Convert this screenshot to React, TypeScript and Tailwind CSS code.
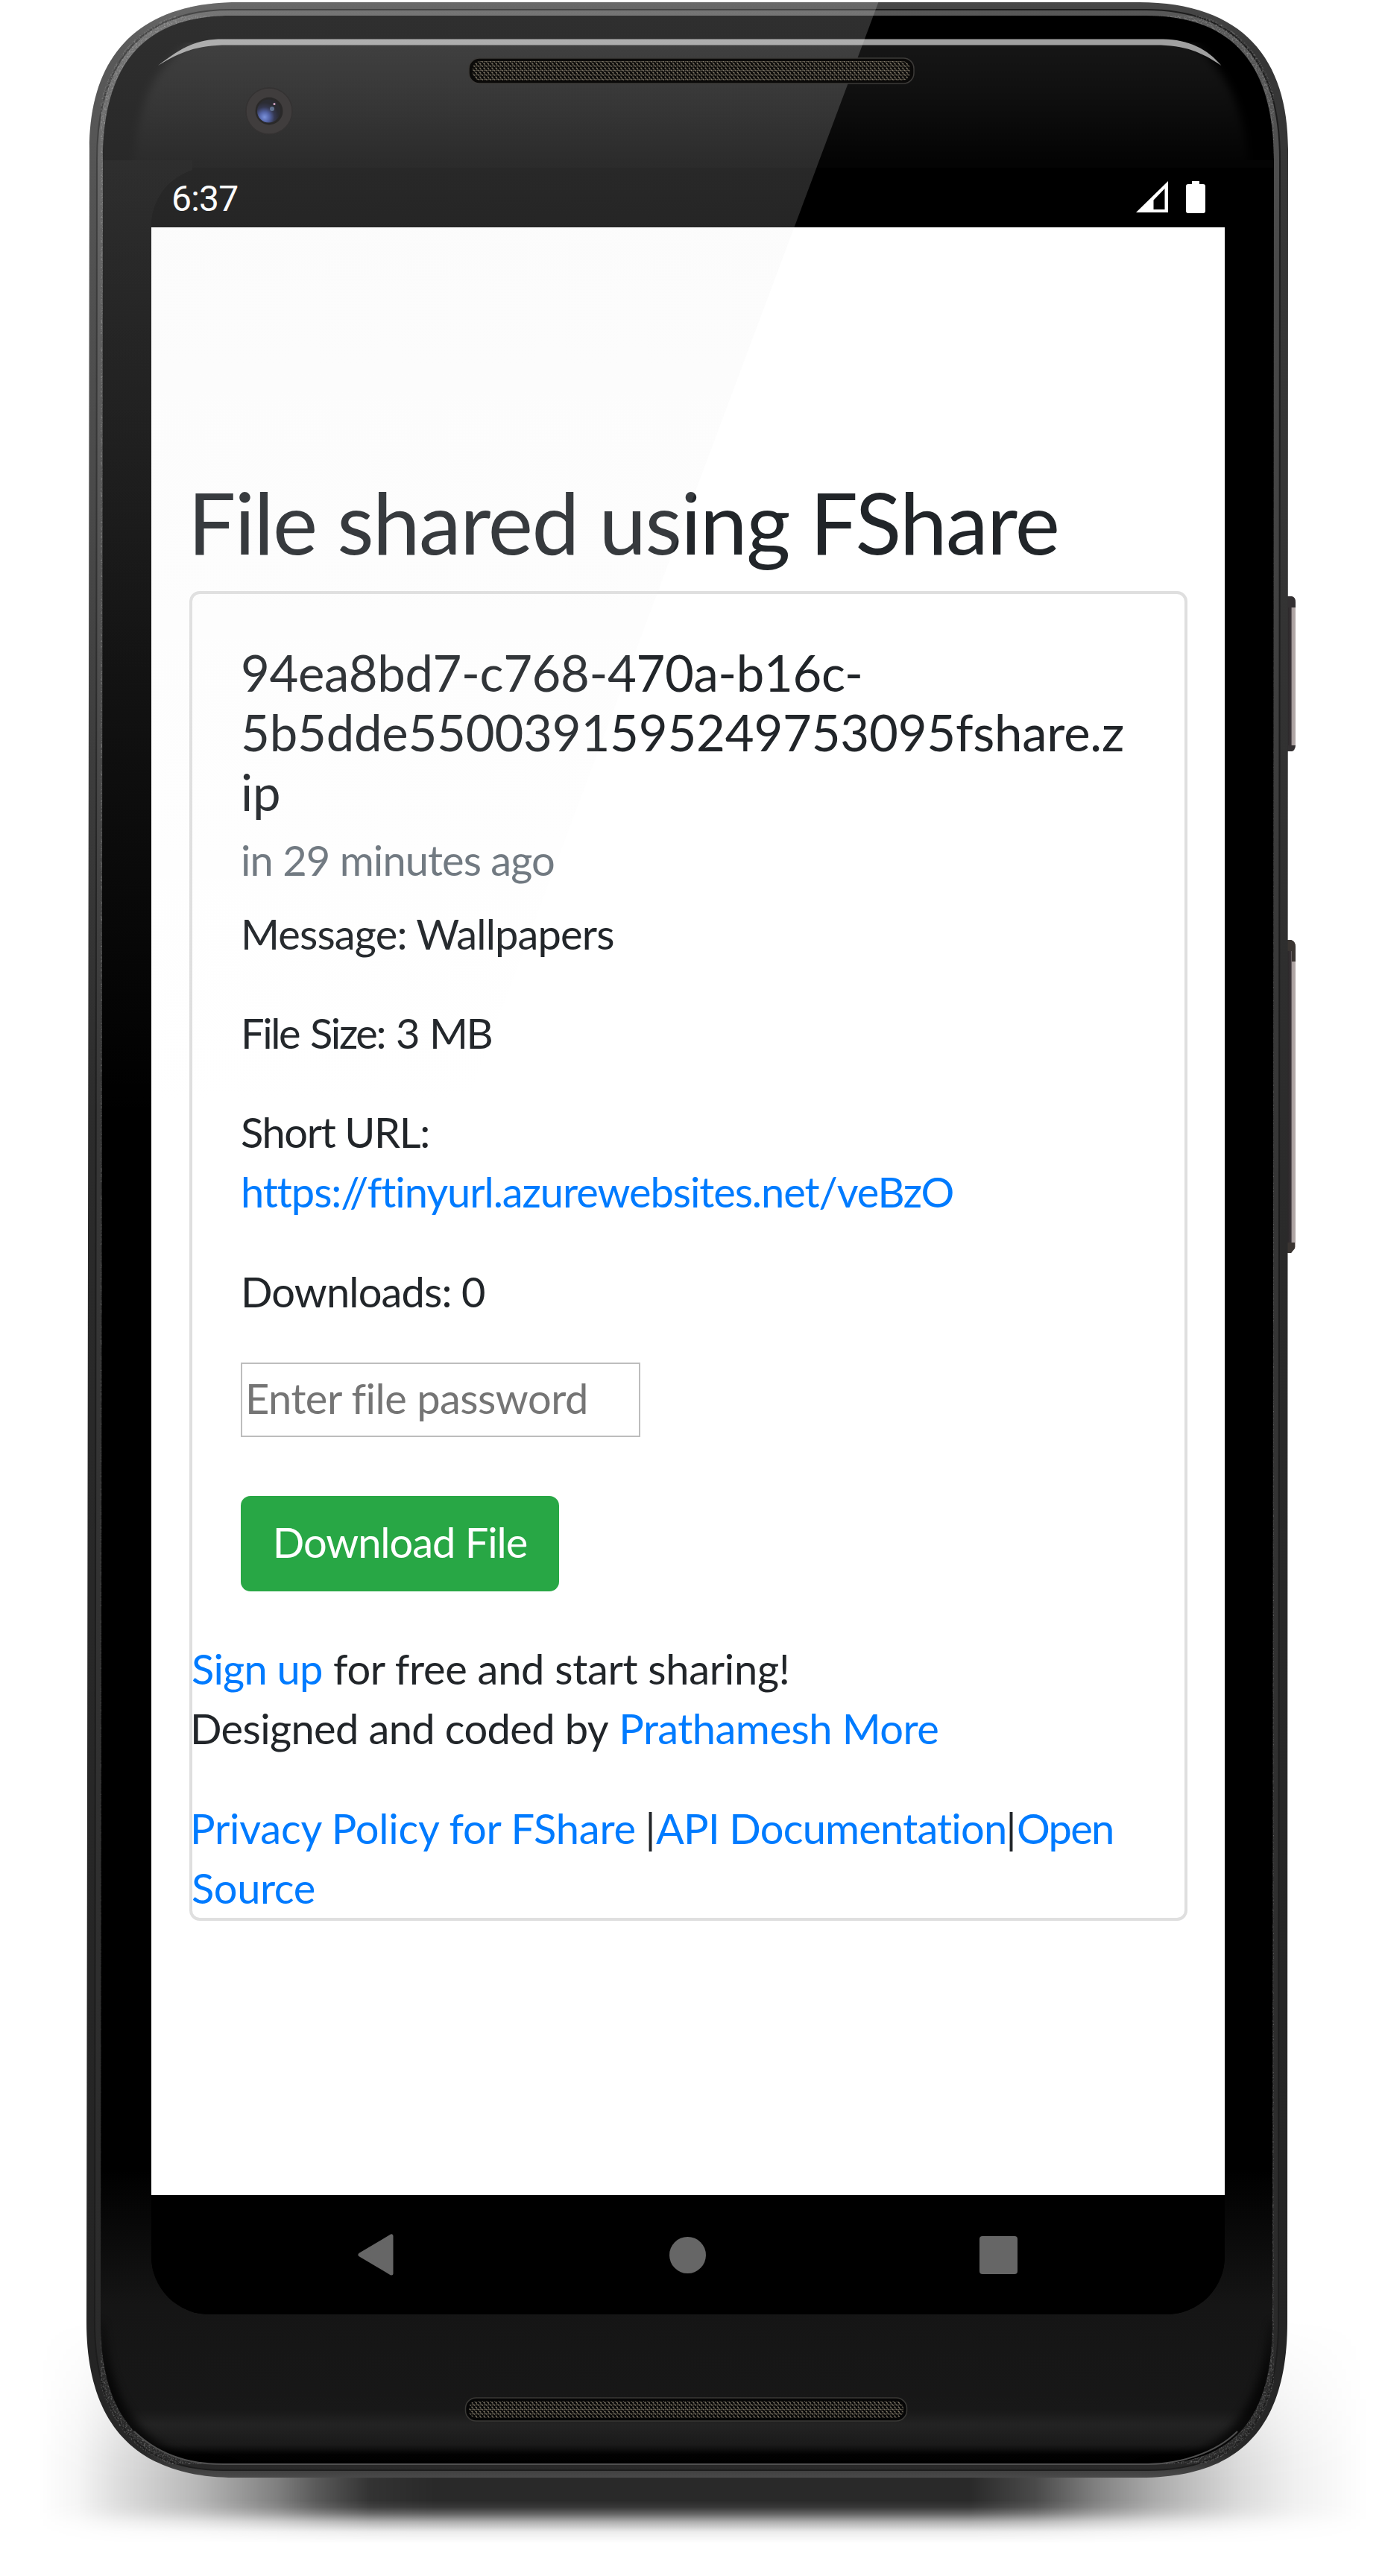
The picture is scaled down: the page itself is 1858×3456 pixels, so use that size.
import type { ReactNode } from 'react';

const OUTER =
  'M120 200C120 80 180 3 320 3H1528C1668 3 1728 80 1728 200L1727 3115C1727 3250 1670 3324 1530 3324H315C180 3324 116 3250 116 3115Z';
const INNER =
  'M138 215C138 90 190 21 310 21H1537C1657 21 1709 90 1709 215L1707 3115C1707 3240 1660 3306 1540 3306H300C190 3306 135 3240 135 3115Z';

function Chassis() {
  return (
    <svg className="absolute inset-0" width="1858" height="3456" viewBox="0 0 1858 3456" fill="none">
      <defs>
        <linearGradient id="shadowX" x1="50" x2="1835" y1="0" y2="0" gradientUnits="userSpaceOnUse">
          <stop offset="0" stopColor="#000" stopOpacity="0" />
          <stop offset="0.03" stopColor="#000" stopOpacity="0.04" />
          <stop offset="0.06" stopColor="#000" stopOpacity="0.13" />
          <stop offset="0.12" stopColor="#000" stopOpacity="0.28" />
          <stop offset="0.18" stopColor="#000" stopOpacity="0.5" />
          <stop offset="0.21" stopColor="#000" stopOpacity="0.65" />
          <stop offset="0.25" stopColor="#000" stopOpacity="0.8" />
          <stop offset="0.3" stopColor="#000" stopOpacity="0.84" />
          <stop offset="0.7" stopColor="#000" stopOpacity="0.84" />
          <stop offset="0.75" stopColor="#000" stopOpacity="0.71" />
          <stop offset="0.795" stopColor="#000" stopOpacity="0.5" />
          <stop offset="0.84" stopColor="#000" stopOpacity="0.33" />
          <stop offset="0.905" stopColor="#000" stopOpacity="0.14" />
          <stop offset="0.945" stopColor="#000" stopOpacity="0.06" />
          <stop offset="1" stopColor="#000" stopOpacity="0" />
        </linearGradient>
        <linearGradient id="shadowY" x1="0" x2="0" y1="3110" y2="3412" gradientUnits="userSpaceOnUse">
          <stop offset="0" stopColor="#fff" stopOpacity="0" />
          <stop offset="0.3" stopColor="#fff" stopOpacity="0.4" />
          <stop offset="0.62" stopColor="#fff" stopOpacity="0.93" />
          <stop offset="0.72" stopColor="#fff" />
          <stop offset="0.81" stopColor="#fff" />
          <stop offset="0.84" stopColor="#fff" stopOpacity="0.93" />
          <stop offset="0.87" stopColor="#fff" stopOpacity="0.72" />
          <stop offset="0.905" stopColor="#fff" stopOpacity="0.38" />
          <stop offset="0.95" stopColor="#fff" stopOpacity="0.09" />
          <stop offset="1" stopColor="#fff" stopOpacity="0" />
        </linearGradient>
        <mask id="shadowMask" maskUnits="userSpaceOnUse" x="0" y="3100" width="1858" height="320">
          <rect x="0" y="3100" width="1858" height="320" fill="url(#shadowY)" />
        </mask>
        <linearGradient id="rim" x1="0" x2="0" y1="3" y2="3324" gradientUnits="userSpaceOnUse">
          <stop offset="0" stopColor="#484848" />
          <stop offset="0.02" stopColor="#363636" />
          <stop offset="0.2" stopColor="#353535" />
          <stop offset="0.5" stopColor="#2a2a2a" />
          <stop offset="0.95" stopColor="#242424" />
          <stop offset="0.99" stopColor="#282828" />
          <stop offset="1" stopColor="#4a4a4a" />
        </linearGradient>
        <linearGradient id="rimInner" x1="0" x2="0" y1="10" y2="3324" gradientUnits="userSpaceOnUse">
          <stop offset="0" stopColor="#585858" />
          <stop offset="0.1" stopColor="#4a4a4a" />
          <stop offset="0.4" stopColor="#383838" />
          <stop offset="1" stopColor="#292929" />
        </linearGradient>
        <linearGradient id="glass" x1="0" x2="0" y1="21" y2="3306" gradientUnits="userSpaceOnUse">
          <stop offset="0" stopColor="#000" />
          <stop offset="0.88" stopColor="#000" />
          <stop offset="0.935" stopColor="#151515" />
          <stop offset="0.97" stopColor="#171717" />
          <stop offset="0.978" stopColor="#181818" />
          <stop offset="0.984" stopColor="#232323" />
          <stop offset="0.992" stopColor="#1a1a1a" />
          <stop offset="0.996" stopColor="#020202" />
          <stop offset="1" stopColor="#000" />
        </linearGradient>
        <linearGradient id="brow" x1="0" x2="0" y1="60" y2="215" gradientUnits="userSpaceOnUse">
          <stop offset="0" stopColor="#161616" />
          <stop offset="0.4" stopColor="#101010" />
          <stop offset="1" stopColor="#040404" />
        </linearGradient>
        <linearGradient id="side" x1="0" x2="0" y1="215" y2="900" gradientUnits="userSpaceOnUse">
          <stop offset="0" stopColor="#070707" />
          <stop offset="1" stopColor="#000" />
        </linearGradient>
        <linearGradient id="key" x1="1728" x2="1739" y1="0" y2="0" gradientUnits="userSpaceOnUse">
          <stop offset="0" stopColor="#2c282a" />
          <stop offset="0.35" stopColor="#3a3438" />
          <stop offset="0.5" stopColor="#a89e9e" />
          <stop offset="1" stopColor="#b9b0ae" />
        </linearGradient>
        <filter id="soft" x="-10%" y="-20%" width="120%" height="140%" colorInterpolationFilters="sRGB">
          <feGaussianBlur stdDeviation="6" />
        </filter>
        <filter id="grain" x="0" y="0" width="100%" height="100%">
          <feTurbulence type="fractalNoise" baseFrequency="0.45" numOctaves="2" seed="4" />
          <feColorMatrix values="0 0 0 0 1  0 0 0 0 1  0 0 0 0 1  0.7 0 0 0 -0.32" />
          <feComposite in2="SourceGraphic" operator="in" />
        </filter>
        <clipPath id="inner">
          <path d={INNER} />
        </clipPath>
        <clipPath id="browClip">
          <rect x="130" y="57" width="1590" height="158" />
        </clipPath>
        <clipPath id="outer">
          <path d={OUTER} />
        </clipPath>
      </defs>
      <rect x="0" y="3100" width="1858" height="320" fill="url(#shadowX)" mask="url(#shadowMask)" />
      <path d="M1724 800H1733Q1738 801 1738 808V1002Q1737 1007 1733 1008H1724Z" fill="url(#key)" />
      <path d="M1728 800H1733Q1738 801 1738 808V815H1728ZM1728 1000H1738Q1737 1007 1733 1008H1728Z" fill="#333032" />
      <path d="M1723 1261H1732Q1738 1263 1738 1270V1673L1732 1681H1723Z" fill="url(#key)" />
      <path d="M1727 1261H1732Q1738 1263 1738 1270V1290H1733V1276H1727ZM1727 1667H1737V1675L1732 1681H1727Z" fill="#3a3532" />
      <path d={OUTER} fill="url(#rim)" />
      <path d={INNER} stroke="#1d1d1d" strokeWidth="18" />
      <path d={INNER} stroke="url(#rimInner)" strokeWidth="14" />
      <g clipPath="url(#outer)">
        <path d={INNER} stroke="#fff" strokeWidth="22" filter="url(#grain)" />
      </g>
      <path d={INNER} fill="url(#glass)" />
      <g clipPath="url(#inner)">
        <g clipPath="url(#browClip)">
          <path
            d="M178 250C180 165 196 115 222 88Q254 50 300 40H1556Q1604 50 1630 88C1656 120 1672 160 1678 250Z"
            fill="url(#brow)"
            filter="url(#soft)"
          />
        </g>
        <rect x="138" y="215" width="1570" height="10" fill="#040404" />
        <rect x="138" y="215" width="120" height="700" fill="url(#side)" />
        <path d="M135 3115V3310H320C200 3300 150 3240 138 3115Z" fill="#000" opacity="0.7" filter="url(#soft)" />
        <path d="M1708 3115V3310H1520C1640 3300 1690 3240 1705 3115Z" fill="#000" opacity="0.7" filter="url(#soft)" />
      </g>
      <path
        d="M212 88C245 62 265 52.5 299 52.5H1560C1595 53 1620 66 1638.5 88C1612 70 1590 60.5 1550 60.5H305C265 60.5 240 70 212 88Z"
        fill="#a0a0a0"
      />
      <path d="M180 3262C220 3300 265 3306 300 3306H1540C1580 3306 1630 3292 1660 3262" stroke="#505050" strokeWidth="2" />
    </svg>
  );
}

function Gloss() {
  return (
    <svg className="pointer-events-none absolute inset-0" width="1858" height="3456" viewBox="0 0 1858 3456" fill="none">
      <defs>
        <linearGradient id="gloss" x1="0" x2="0" y1="0" y2="1500" gradientUnits="userSpaceOnUse">
          <stop offset="0" stopColor="#e9e9e9" stopOpacity="0.205" />
          <stop offset="0.23" stopColor="#e9e9e9" stopOpacity="0.155" />
          <stop offset="0.47" stopColor="#e9e9e9" stopOpacity="0.11" />
          <stop offset="0.72" stopColor="#e9e9e9" stopOpacity="0.055" />
          <stop offset="0.87" stopColor="#e9e9e9" stopOpacity="0.025" />
          <stop offset="1" stopColor="#e9e9e9" stopOpacity="0" />
        </linearGradient>
        <clipPath id="glossClip">
          <path d={OUTER} />
        </clipPath>
        <pattern id="mesh" width="5.4" height="6" patternUnits="userSpaceOnUse">
          <path d="M0.6 0.8L2.6 2.6M3.3 3.8L5.2 5.4" stroke="#8c8371" strokeWidth="1.4" />
          <path d="M2.8 3.4L0.8 5.2" stroke="#5c574c" strokeWidth="1.2" />
        </pattern>
        <radialGradient id="lens" cx="0.32" cy="0.76" r="0.62">
          <stop offset="0" stopColor="#7a92dc" />
          <stop offset="0.35" stopColor="#5464a6" />
          <stop offset="0.7" stopColor="#34374e" />
          <stop offset="1" stopColor="#2b2c33" />
        </radialGradient>
      </defs>
      <path clipPath="url(#glossClip)" d="M0 0H1179.5L618.5 1500H0Z" fill="url(#gloss)" />
      <rect x="629" y="78" width="597" height="34" rx="14" fill="#0b0a09" stroke="#3d3b39" strokeWidth="1.5" />
      <rect x="634" y="82" width="587" height="26" rx="11" fill="url(#mesh)" />
      <rect x="624.5" y="3217" width="592" height="31" rx="14" fill="#060606" stroke="#3a3936" strokeWidth="1.5" />
      <rect x="629" y="3221" width="583" height="23" rx="10" fill="url(#mesh)" />
      <circle cx="361" cy="149" r="31" fill="#403d3d" stroke="#343232" strokeWidth="1.5" />
      <circle cx="361" cy="149" r="18.500" fill="#2a2929" />
      <circle cx="360.500" cy="149" r="15.500" fill="url(#lens)" />
      <circle cx="365" cy="146" r="3" fill="#6c7fa0" opacity="0.8" />
      <circle cx="368" cy="139.500" r="1.500" fill="#d8a9c8" />
    </svg>
  );
}

function StatusBar() {
  return (
    <div className="flex h-[80px] justify-between bg-black pl-[27px] pr-[26px] text-white">
      <span className="pt-[2px] font-['Roboto'] text-[48px] leading-[80px] tracking-[-0.8px]">6:37</span>
      <div className="flex gap-[24px] pt-[18px]">
        <svg width="43" height="42" viewBox="0 0 43 42">
          <path fillRule="evenodd" fill="#fff" d="M43 0V42H0ZM38.500 10L23.500 25.500V38H38.500Z" />
        </svg>
        <svg width="26" height="43" viewBox="0 0 26 43">
          <path fill="#fff" d="M8 0H18V4H23Q26 4 26 7V40Q26 43 23 43H3Q0 43 0 40V7Q0 4 3 4H8Z" />
        </svg>
      </div>
    </div>
  );
}

function NavBar() {
  return (
    <div className="flex h-[160px] items-center bg-black pl-[277px]">
      <svg width="48" height="56" viewBox="0 0 48 56">
        <path d="M45 3V53L3 28Z" fill="#666" stroke="#666" strokeWidth="5" strokeLinejoin="round" />
      </svg>
      <div className="ml-[370px] size-[49px] rounded-full bg-[#666]" />
      <div className="ml-[367px] size-[51px] rounded-[4px] bg-[#666]" />
    </div>
  );
}

function Link({ children, className = '' }: { children: ReactNode; className?: string }) {
  return (
    <a href="#" className={`text-[#007bff] ${className}`}>
      {children}
    </a>
  );
}

function ShareCard() {
  return (
    <div className="mt-[25px] ml-[51px] flex h-[1784px] w-[1339px] flex-col rounded-[14px] border-4 border-[#dfdfdf] bg-white">
      <div className="flex flex-col items-start pt-[65px] pl-[65px]">
        <h5 className="text-[67px] whitespace-nowrap">
          <span className="tracking-[-0.39px]">94ea8bd7-c768-470a-b16c-</span>
          <br />
          <span className="tracking-[-0.2px]">5b5dde5500391595249753095fshare.z</span>
          <br />
          <span>ip</span>
        </h5>
        <h6 className="mt-[12px] tracking-[-0.93px] text-[#6c757d]">in 29 minutes ago</h6>
        <p className="mt-[19px] tracking-[-0.84px]">Message: Wallpapers</p>
        <p className="mt-[53px] tracking-[-2.4px] [word-spacing:3px]">File Size: 3 MB</p>
        <p className="mt-[53px] tracking-[-1.4px]">
          Short URL:
          <br />
          <Link className="tracking-[-1.06px]">https://ftinyurl.azurewebsites.net/veBzO</Link>
        </p>
        <p className="mt-[54px] tracking-[-0.86px]">Downloads: 0</p>
        <input
          type="text"
          placeholder="Enter file password"
          className="mt-[55px] h-[100px] w-[536px] border-2 border-[#bdbdbd] bg-white pb-[6px] pl-[4px] tracking-[-0.5px] placeholder:text-[#757575]"
        />
        <button className="mt-[79px] h-[128px] w-[427px] rounded-[13px] bg-[#28a745] pb-[5px] tracking-[-1.04px] text-white">
          Download File
        </button>
      </div>
      <div className="mt-[64px] whitespace-nowrap">
        <div className="-ml-px">
          <Link className="tracking-[-0.75px]">Sign up</Link>{' '}
          <span className="tracking-[-0.3px]">for free and start sharing!</span>
        </div>
        <div className="-ml-[3px]">
          <span className="tracking-[-0.62px]">Designed and coded by</span>{' '}
          <Link className="tracking-[-0.52px]">Prathamesh More</Link>
        </div>
        <div className="mt-[54px] -ml-[3px] flex">
          <Link className="w-[610px] tracking-[-0.22px]">Privacy Policy for FShare</Link>
          <span className="w-[15px] text-center">|</span>
          <Link className="w-[469px] tracking-[-0.8px]">API Documentation</Link>
          <span className="w-[15px] text-center">|</span>
          <Link className="tracking-[-1.74px]">Open</Link>
        </div>
        <Link className="-ml-px block tracking-[-0.4px]">Source</Link>
      </div>
    </div>
  );
}

export default function App() {
  return (
    <div className="relative h-[3456px] w-[1858px] overflow-hidden bg-white font-['Lato',sans-serif] text-[56px] leading-[80px] text-[#212529]">
      <Chassis />
      <div className="relative pt-[225px] pl-[203px]">
        <div className="flex h-[2880px] w-[1440px] flex-col overflow-hidden rounded-[78px] bg-black">
          <StatusBar />
          <main className="h-[2640px] bg-white pt-[327px]">
            <h1 className="pl-[49px] text-[114px] leading-[136px] tracking-[-1.54px] whitespace-nowrap">
              File shared using FShare
            </h1>
            <ShareCard />
          </main>
          <NavBar />
        </div>
      </div>
      <Gloss />
    </div>
  );
}
